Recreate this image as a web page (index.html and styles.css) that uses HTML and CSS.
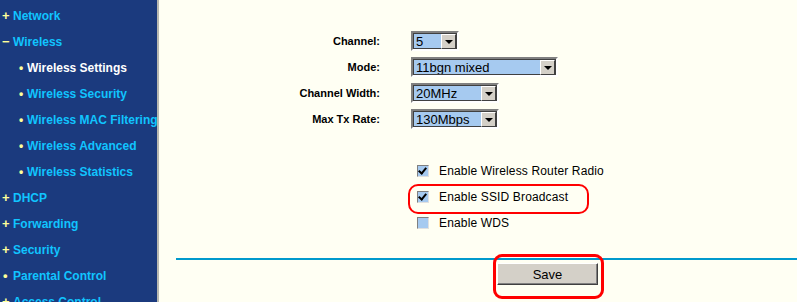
FILE: index.html
```html
<!DOCTYPE html>
<html lang="en">
<head>
	<meta charset="UTF-8">
	<title>Wireless Settings</title>
	<link rel="stylesheet" href="styles.css">
</head>
<body>
	<div class="page">
		<ul class="menu">
			<li class="top"><span class="mark">+</span>Network</li>
			<li class="top"><span class="mark">&minus;</span>Wireless</li>
			<li class="sub active"><span class="dot">&bull;</span>Wireless Settings</li>
			<li class="sub"><span class="dot">&bull;</span>Wireless Security</li>
			<li class="sub"><span class="dot">&bull;</span>Wireless MAC Filtering</li>
			<li class="sub"><span class="dot">&bull;</span>Wireless Advanced</li>
			<li class="sub"><span class="dot">&bull;</span>Wireless Statistics</li>
			<li class="top"><span class="mark">+</span>DHCP</li>
			<li class="top"><span class="mark">+</span>Forwarding</li>
			<li class="top"><span class="mark">+</span>Security</li>
			<li class="top"><span class="mark dotmark">&bull;</span>Parental Control</li>
			<li class="top"><span class="mark">+</span>Access Control</li>
		</ul>
		<div class="content">
			<div class="form">
				<div class="label">Channel:</div>
				<div class="select w-channel"><span class="value">5</span><span class="drop"></span></div>
				<div class="label">Mode:</div>
				<div class="select w-mode"><span class="value">11bgn mixed</span><span class="drop"></span></div>
				<div class="label">Channel Width:</div>
				<div class="select w-rate"><span class="value">20MHz</span><span class="drop"></span></div>
				<div class="label">Max Tx Rate:</div>
				<div class="select w-rate"><span class="value">130Mbps</span><span class="drop"></span></div>
			</div>
			<div class="checks">
				<div class="check"><span class="box on"></span>Enable Wireless Router Radio</div>
				<div class="check ring"><span class="box on"></span>Enable SSID Broadcast</div>
				<div class="check"><span class="box"></span>Enable WDS</div>
			</div>
			<div class="rule"></div>
			<div class="actions">
				<div class="btnwrap"><button class="save">Save</button></div>
			</div>
		</div>
	</div>
</body>
</html>
```

FILE: styles.css
```css
* {
	margin: 0;
	padding: 0;
	box-sizing: border-box;
}
body {
	background-color: #fffff3;
	font-family: "Liberation Sans", Arial, sans-serif;
	overflow: hidden;
}
.page {
	display: flex;
	height: 302px;
}
.menu {
	width: 159px;
	flex: none;
	background-color: #1b3a7e;
	border-right: 2px solid #b8b8b0;
	list-style: none;
	padding-top: 3px;
}
.menu li {
	height: 26px;
	line-height: 26px;
	font-size: 12px;
	font-weight: bold;
	color: #10c4ff;
	white-space: nowrap;
	overflow: hidden;
}
.menu .top {
	padding-left: 2px;
}
.menu .sub {
	padding-left: 19px;
}
.menu .active {
	color: #ffffff;
}
.mark {
	display: inline-block;
	width: 11px;
	color: #ffff99;
	font-size: 13px;
}
.dotmark {
	padding-left: 1px;
}
.dot {
	display: inline-block;
	width: 8px;
	color: #ffff99;
}
.content {
	flex: 1;
	position: relative;
}
.form {
	display: grid;
	grid-template-columns: 221px auto;
	column-gap: 31px;
	justify-content: start;
	margin-top: 28px;
}
.label {
	height: 26px;
	line-height: 26px;
	text-align: right;
	font-size: 11px;
	font-weight: bold;
	color: #000;
}
.select {
	margin-top: 3px;
	height: 20px;
	display: flex;
	align-items: center;
	border: 2px solid;
	border-color: #808080 #ffffff #ffffff #808080;
	outline: 1px solid #404040;
	outline-offset: -3px;
	background-color: #a6caf0;
	padding: 0 1px 0 2px;
	font-size: 13px;
	color: #000;
}
.w-channel {
	width: 48px;
}
.w-mode {
	width: 147px;
}
.w-rate {
	width: 88px;
}
.value {
	flex: 1;
	padding-left: 1px;
}
.drop {
	width: 15px;
	height: 15px;
	background-color: #d4d0c8;
	border: 1px solid;
	border-color: #ffffff #404040 #404040 #ffffff;
	position: relative;
}
.drop::after {
	content: "";
	position: absolute;
	left: 3px;
	top: 5px;
	border-left: 4px solid transparent;
	border-right: 4px solid transparent;
	border-top: 4px solid #000;
}
.checks {
	margin-top: 26px;
	margin-left: 258px;
}
.check {
	height: 26px;
	display: flex;
	align-items: center;
	font-size: 12px;
	letter-spacing: 0.15px;
	color: #000;
	position: relative;
	width: max-content;
}
.box {
	width: 12px;
	height: 12px;
	margin-right: 10px;
	border: 1px solid;
	border-color: #808080 #e0e0e0 #e0e0e0 #808080;
	background-color: #a6caf0;
	position: relative;
}
.box.on::after {
	content: "";
	position: absolute;
	left: 2px;
	top: 0px;
	width: 3px;
	height: 6px;
	border-right: 2px solid #000;
	border-bottom: 2px solid #000;
	transform: rotate(40deg);
}
.ring::before {
	content: "";
	position: absolute;
	left: -9px;
	top: 0px;
	width: 177px;
	height: 26px;
	border: 2px solid #ff0000;
	border-radius: 10px;
}
.rule {
	margin-top: 22px;
	margin-left: 17px;
	height: 2px;
	background-color: #0099cc;
}
.actions {
	margin-left: 334px;
}
.btnwrap {
	display: inline-block;
	margin-top: -6px;
	padding: 6px 3px 11px 1px;
	border: 3px solid #ff0000;
	border-radius: 9px;
}
.save {
	display: block;
	width: 101px;
	height: 22px;
	background-color: #d4d0c8;
	border: 1px solid;
	border-color: #ffffff #404040 #404040 #ffffff;
	box-shadow: inset -1px -1px 0 #808080;
	font-family: "Liberation Sans", Arial, sans-serif;
	font-size: 13px;
	color: #000;
}
```
